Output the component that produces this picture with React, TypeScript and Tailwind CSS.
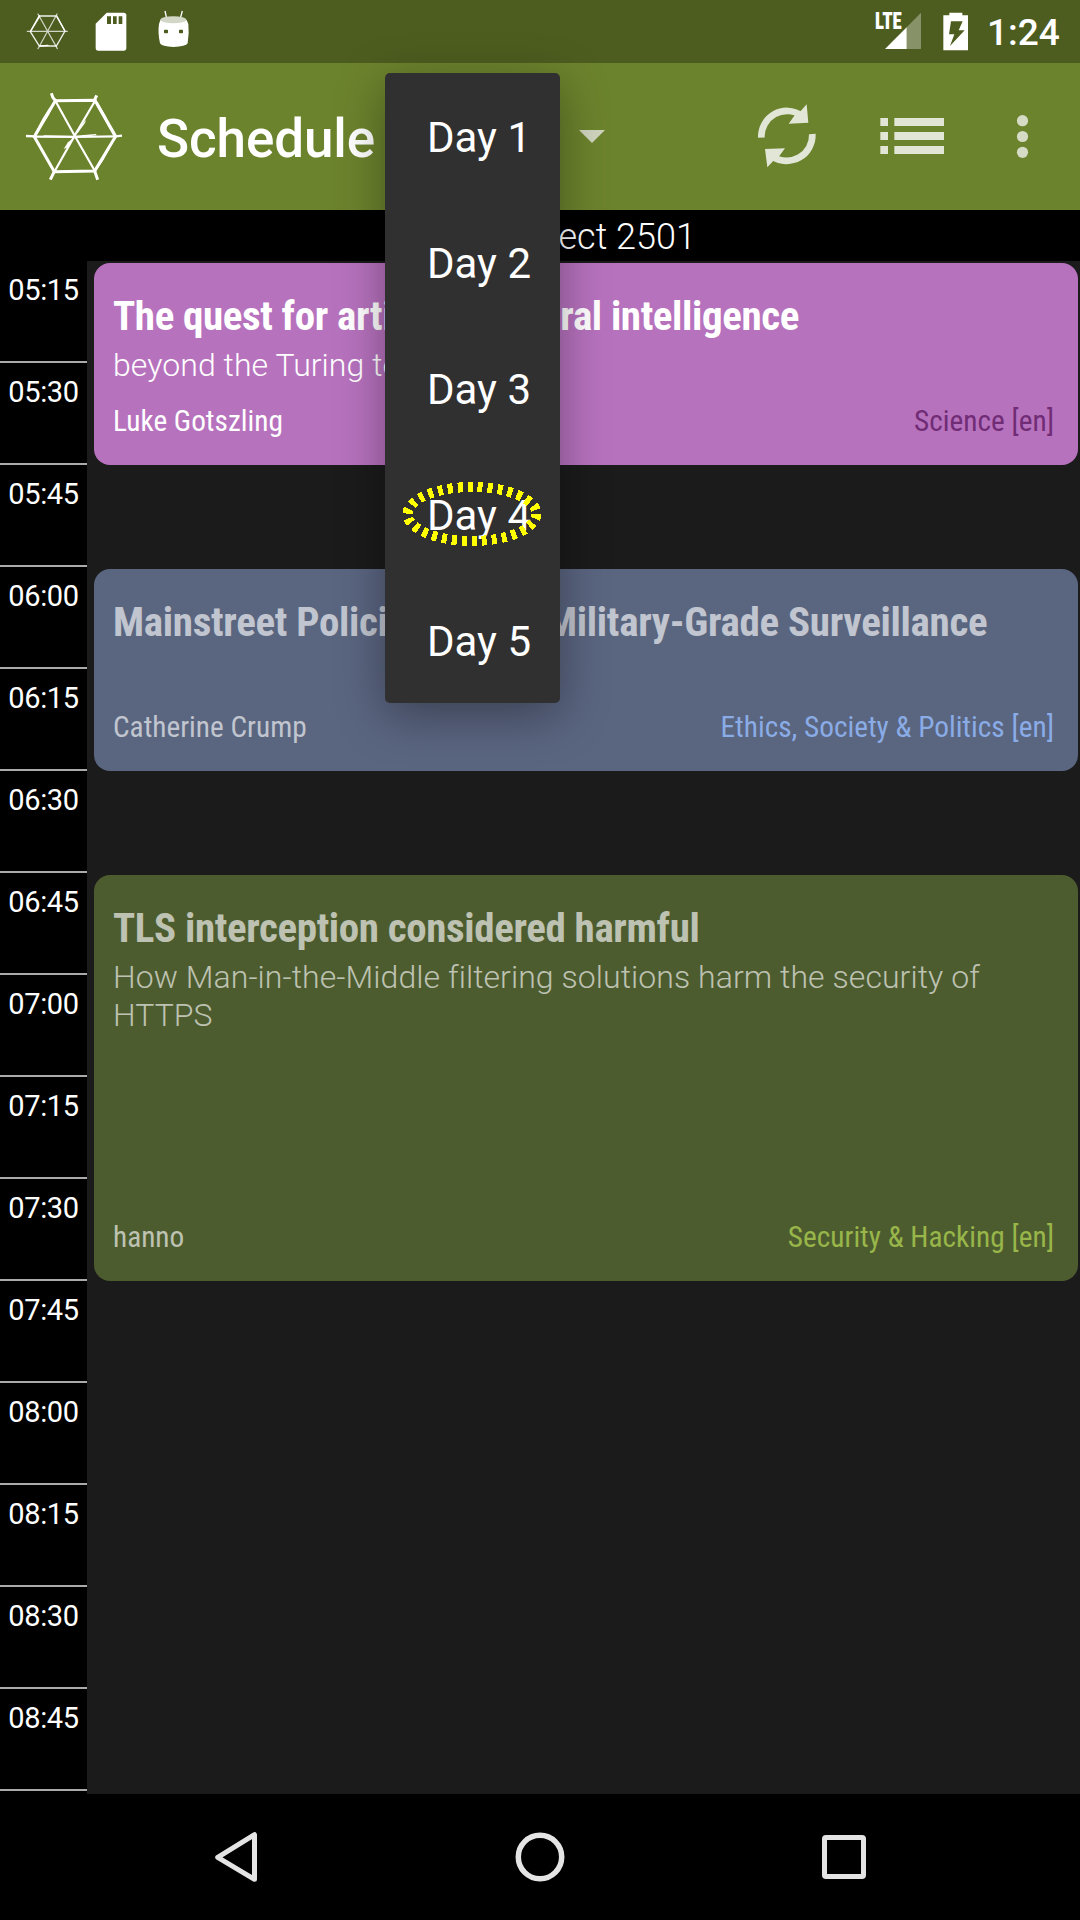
import type { ReactNode } from "react";

const times = [
  "05:15", "05:30", "05:45", "06:00", "06:15", "06:30", "06:45", "07:00",
  "07:15", "07:30", "07:45", "08:00", "08:15", "08:30", "08:45",
];
const days = ["Day 1", "Day 2", "Day 3", "Day 4", "Day 5"];

function WebLogo({ className, thin }: { className: string; thin?: boolean }) {
  if (thin) {
    return (
      <svg className={className} viewBox="78 36 129 117" fill="none" stroke="#fff" strokeLinecap="round">
        <path d="M120 48L170 48L195 93L169 138L118 138L91 95Z" strokeWidth="4" opacity=".9" />
        <path d="M82 94L202 94M114 42L172 146M171 42L114 146" strokeWidth="3.6" opacity=".75" />
        <path d="M118 47L92 93M171 51L193 90M120 138L144 136" strokeWidth="4" />
      </svg>
    );
  }
  return (
    <svg className={className} viewBox="75 276 294 267">
      <g fill="none" stroke="#fff" strokeLinecap="butt">
        <path d="M166 302L285 301L347 409L284 513L163 515L103 410Z" strokeWidth="9" />
        <path d="M104 410L224 411L346 409M166 302L224 407L286 515M285 303L224 407L164 514" strokeWidth="6.5" />
        <path d="M154 280L159 293L170 306M290 286L282 304M163 514L151 539M283 510L293 539" strokeWidth="9" />
        <path d="M78 408L104 409M347 409L366 407" strokeWidth="7" />
      </g>
      <g fill="#fff">
        <path d="M164 306L147 344L133 366L118 390L107 408L100 408L127 357L146 326Z" />
        <path d="M283 304L293 306L320 353L317 356L337 386L348 406L340 407L313 359L290 319Z" />
        <path d="M344 410L337 432L310 481L288 513L281 509L313 465Z" />
        <path d="M130 406L224 407L288 402L290 406L248 411L224 415L190 410L132 409Z" />
        <path d="M228 395L258 359L255 369L233 399Z" />
        <path d="M191 447L204 427L216 418L205 441Z" />
      </g>
    </svg>
  );
}

function SdCard() {
  return (
    <svg className="h-[39px] w-[32px]" viewBox="284 36 96 117">
      <path fill="#fff" d="M319 38H370Q378 38 378 46V144Q378 152 370 152H294Q286 152 286 144V71Z" />
      <path fill="#4d5d1f" d="M320 49H332V72H320ZM338 49H349V72H338ZM355 49H366V72H355Z" />
    </svg>
  );
}

function Droid() {
  return (
    <svg className="h-[38px] w-[33px]" viewBox="471 30 99 114">
      <path d="M495 33L500 55M547 33L541 55" stroke="#fff" strokeWidth="4" />
      <path fill="#fff" d="M481 60Q520 76 560 60L565 72Q568 100 563 130Q558 140 520 141Q485 140 480 130Q473 100 477 72Z" />
      <ellipse cx="520" cy="59" rx="39" ry="10.500" fill="#d3d7c7" />
      <path fill="#4d5d1f" d="M494 89h8l2 2v7l-2 2h-8l-2-2v-7ZM539 89h8l2 2v7l-2 2h-8l-2-2v-7Z" />
    </svg>
  );
}

function Signal() {
  return (
    <div className="relative h-[38px] w-[46px]">
      <svg className="h-[38px] w-[46px]" viewBox="528 36 138 114">
        <path fill="#879268" d="M663 38V147H620V82Z" />
        <path fill="#fff" d="M620 82V147H555Z" />
      </svg>
      <span className="absolute -left-px top-0 origin-left scale-x-[.82] text-[23px] font-black leading-[19px] text-white [font-stretch:75%]">LTE</span>
    </div>
  );
}

function Battery() {
  return (
    <svg className="h-[39px] w-[26px]" viewBox="728 35 78 117">
      <path fill="#fff" d="M747 37H786V45H803V150H729V45H747Z" />
      <path fill="#4d5d1f" d="M752 63H787L775 90H793L749 137L762 102H746Z" />
    </svg>
  );
}

function Refresh() {
  return (
    <svg className="mb-px h-[66px] w-[60px]" viewBox="171 309 180 198">
      <g fill="none" stroke="#e2e6d6" strokeWidth="20">
        <path d="M184 413A77 77 0 0 1 304 346" />
        <path d="M337 402A77 77 0 0 1 218 470" />
      </g>
      <path fill="#e2e6d6" d="M320 313L325 368L266 371L284 346L302 333ZM202 502L195 447L255 445L238 468L219 484Z" />
    </svg>
  );
}

function ListIcon() {
  return (
    <svg className="mb-px h-[36px] w-[64px]" viewBox="540 354 192 108">
      <path fill="#e2e6d6" d="M541 354H564V378H541ZM541 396H564V420H541ZM541 438H564V462H541ZM583 354H732V378H583ZM583 396H732V420H583ZM583 438H732V462H583Z" />
    </svg>
  );
}

function StatusBar() {
  return (
    <div className="flex h-[63px] items-start bg-[#4d5d1f]">
      <WebLogo thin className="ml-[26px] mt-3 h-[39px] w-[43px]" />
      <div className="ml-[26px] mt-3"><SdCard /></div>
      <div className="ml-[30px] mt-2.5"><Droid /></div>
      <div className="ml-auto mt-3"><Signal /></div>
      <div className="ml-[21px] mt-3"><Battery /></div>
      <span className="ml-[18px] mr-[21px] mt-[11px] w-[72px] whitespace-nowrap text-[37px] font-medium leading-[44px]">1:24</span>
    </div>
  );
}

function AppBar() {
  return (
    <div className="flex h-[147px] items-center bg-[#6c832d]">
      <WebLogo className="ml-[25px] h-[89px] w-[98px]" />
      <h1 className="ml-[34px] mt-1 text-[53px] font-medium leading-[64px] tracking-[-0.1px]">Schedule</h1>
      <svg className="ml-auto mr-[152px] h-[13px] w-[26px]" viewBox="0 0 26 13">
        <path d="M0 0H26L13 13Z" fill="#ced4bd" />
      </svg>
      <Refresh />
      <div className="ml-[63px]"><ListIcon /></div>
      <svg className="mb-px ml-[72px] mr-[51px] h-[44px] w-[13px]" viewBox="0 0 13 44" fill="#d6dbc5">
        <circle cx="6.500" cy="6.700" r="5.600" />
        <circle cx="6.500" cy="22.500" r="5.600" />
        <circle cx="6.500" cy="38.300" r="5.600" />
      </svg>
    </div>
  );
}

type CardProps = {
  className: string;
  title: string;
  titleClass?: string;
  subtitle?: string;
  speaker: string;
  track: ReactNode;
  trackClass: string;
};

function Card({ className, title, titleClass = "tracking-[-0.37px]", subtitle, speaker, track, trackClass }: CardProps) {
  return (
    <article className={`ml-[7px] mr-[2px] flex flex-col rounded-[16px] pb-[26px] pl-[19px] pr-6 pt-[29px] ${className}`}>
      <h2 className={`whitespace-nowrap text-[41px] font-bold leading-[49px] [font-stretch:75%] ${titleClass}`}>{title}</h2>
      {subtitle && <p className="mt-[5px] text-[32px] font-light leading-[38px] tracking-[0.06px]">{subtitle}</p>}
      <div className="mt-auto flex justify-between text-[29.300px] leading-[35px] [font-stretch:75%]">
        <span>{speaker}</span>
        <span className={trackClass}>{track}</span>
      </div>
    </article>
  );
}

function DayMenu() {
  return (
    <div className="absolute left-[385px] top-[73px] h-[630px] w-[175px] rounded-[5px] bg-[#303030] shadow-[0_12px_48px_rgba(0,0,0,0.36)]">
      {days.map((day) => (
        <div key={day} className="flex h-[126px] items-center whitespace-nowrap pl-[42px] pt-[2px] text-[42px] leading-[49px]">
          {day}
        </div>
      ))}
      <svg className="absolute left-[16px] top-[408px] h-[66px] w-[141px]" viewBox="0 0 141 66" shapeRendering="crispEdges">
        <ellipse cx="71" cy="33" rx="64.500" ry="27" fill="none" stroke="#ffff00" strokeWidth="10" strokeDasharray="5 5" />
      </svg>
    </div>
  );
}

function NavBar() {
  return (
    <div className="flex h-[126px] items-center bg-black">
      <svg className="ml-[212px] h-[54px] w-[48px]" viewBox="0 0 48 54" fill="none" stroke="#e4e4e4" strokeWidth="5" strokeLinejoin="round">
        <path d="M42.500 4.700V49.300L5.700 27.300Z" />
      </svg>
      <svg className="ml-[254px] h-[52px] w-[52px]" viewBox="0 0 52 52" fill="none" stroke="#e4e4e4" strokeWidth="5.500">
        <circle cx="26" cy="26" r="21.700" />
      </svg>
      <svg className="ml-[256px] h-[44px] w-[44px]" viewBox="0 0 44 44" fill="none" stroke="#e4e4e4" strokeWidth="5">
        <rect x="2.500" y="2.500" width="39" height="39" rx="1.500" />
      </svg>
    </div>
  );
}

export default function App() {
  return (
    <div className="relative h-[1920px] w-[1080px] overflow-hidden bg-black text-white [font-family:Roboto,sans-serif]">
      <StatusBar />
      <AppBar />
      <div className="h-[51px] bg-black pl-[112px] pt-[6px] text-center text-[36px] font-light leading-[42px]">Project 2501</div>
      <div className="flex h-[1533px]">
        <div className="w-[87px] shrink-0">
          {times.map((t) => (
            <div key={t} className="h-[102px] border-b-2 border-[#aaaaaa] pt-3 text-center text-[29px] leading-[35px] tracking-[-0.3px]">
              {t}
            </div>
          ))}
        </div>
        <div className="flex-1 bg-[#1b1b1b] pt-[2px]">
          <Card
            className="h-[202px] bg-[#b772be]"
            title="The quest for artificial general intelligence"
            subtitle="beyond the Turing test"
            speaker="Luke Gotszling"
            track="Science [en]"
            trackClass="text-[#702c75]"
          />
          <Card
            className="mt-[104px] h-[202px] bg-[#5a6580] text-[#c1c5cf]"
            title="Mainstreet Policing Meets Military-Grade Surveillance"
            titleClass="tracking-[-0.31px]"
            speaker="Catherine Crump"
            track="Ethics, Society & Politics [en]"
            trackClass="text-[#8aace6]"
          />
          <Card
            className="mt-[104px] h-[406px] bg-[#4d5c2f] text-[#bdc2b2]"
            title="TLS interception considered harmful"
            subtitle="How Man-in-the-Middle filtering solutions harm the security of HTTPS"
            speaker="hanno"
            track="Security & Hacking [en]"
            trackClass="text-[#98b649]"
          />
        </div>
      </div>
      <NavBar />
      <DayMenu />
    </div>
  );
}
